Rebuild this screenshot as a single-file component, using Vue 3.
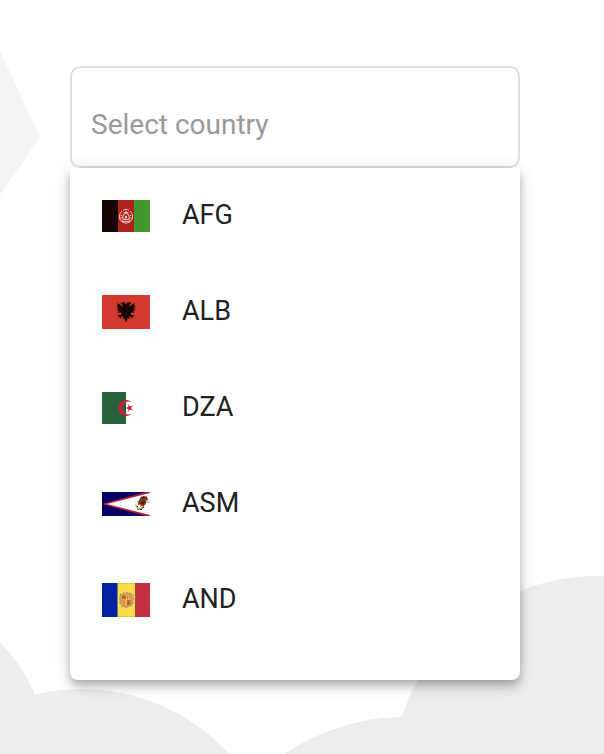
<script setup>
import { ref } from 'vue'

const query = ref('')
const selected = ref('')
const countries = ['AFG', 'ALB', 'DZA', 'ASM', 'AND']

function choose(code) {
  selected.value = code
  query.value = code
}
</script>

<template>
  <main class="page">
    <svg class="backdrop" viewBox="0 0 604 754" preserveAspectRatio="xMinYMin slice" aria-hidden="true">
      <path d="M0 51L40 137L0 195Z" fill="#f4f4f4" />
      <g fill="#ededed">
        <circle cx="-114" cy="756" r="161" />
        <circle cx="82" cy="888" r="199" />
        <circle cx="405" cy="932" r="215" />
        <circle cx="597" cy="782" r="206" />
      </g>
    </svg>

    <div class="picker">
      <input
        v-model="query"
        class="field"
        type="text"
        role="combobox"
        aria-label="Select country"
        aria-expanded="true"
        aria-controls="country-list"
        placeholder="Select country"
      />
      <ul id="country-list" class="menu">
        <li v-for="code in countries" :key="code">
          <button class="option" type="button" :aria-pressed="selected === code" @click="choose(code)">
            <svg v-if="code === 'AFG'" class="flag" viewBox="0 0 48 32" aria-hidden="true">
              <path fill="#160503" d="M0 0h16v32H0z" />
              <path fill="#b0231b" d="M16 0h16v32H16z" />
              <path fill="#43962b" d="M32 0h16v32H32z" />
              <g fill="none" stroke="#f0d0cc" stroke-width=".9">
                <path d="M20 11C15.500 15 17 22 23 23h2C31 22 32.500 15 28 11" />
                <path d="M18.500 15l2 1M18 18l2.500 0M19.500 21l2-1.500M29.500 15l-2 1M30 18l-2.500 0M28.500 21l-2-1.500M21 10.500C22.500 9 25.500 9 27 10.500" />
                <path d="M21 19.500v-3a3 3 0 0 1 6 0v3zM24 10.500v3M21.500 12.500h5M20 21.500h8" />
              </g>
              <path fill="#f0d0cc" d="M23 16h2v2.500h-2z" />
            </svg>

            <svg v-else-if="code === 'ALB'" class="flag" viewBox="0 0 48 34" aria-hidden="true">
              <path fill="#d3392f" d="M0 0h48v34H0z" />
              <path
                fill="#160706"
                d="M24 9.500L22.500 7L20 7.200L18.500 9L20.500 9.500L20.500 12L18 9.500L15 8L16 10L14.500 10L16 11.500L14.500 12L16.500 13.200L14.500 14L16.500 15L15 16L17.500 16.500L15 18L18 17.500L20 18.500L18 20L15 20L17 21.300L15.500 22.500L18 22L18.500 23.500L20 21.500L21.500 21.500L20.500 24L22.500 23.500L24 27.500L25.500 23.500L27.500 24L26.500 21.500L28 21.500L29.500 23.500L30 22L32.500 22.500L31 21.300L33 20L30 20L28 18.500L30 17.500L33 18L30.500 16.500L33 16L31.500 15L33.500 14L31.500 13.200L33.500 12L32 11.500L33.500 10L32 10L33 8L30 9.500L27.500 12L27.500 9.500L29.500 9L28 7.200L25.500 7Z"
              />
            </svg>

            <svg v-else-if="code === 'DZA'" class="flag" viewBox="0 0 48 32" aria-hidden="true">
              <path fill="#fff" d="M24 0h24v32H24z" />
              <path fill="#286239" d="M0 0h24v32H0z" />
              <path fill="#ce1c3a" d="M29.700 10.200A8 8 0 1 0 29.700 21.800A6.500 6.500 0 1 1 29.700 10.200Z" />
              <path
                fill="#ce1c3a"
                d="M23.500 16L26.300 15.100V12.200L28 14.500L30.800 13.600L29.100 16L30.800 18.400L28 17.500L26.300 19.800V16.900Z"
              />
            </svg>

            <svg v-else-if="code === 'ASM'" class="flag" viewBox="0 0 48 24" aria-hidden="true">
              <path fill="#020064" d="M0 0h48v24H0z" />
              <path fill="#bd2034" d="M0 12L44 0h4v24h-4Z" />
              <path fill="#fff" d="M5 12L48 1v22Z" />
              <path
                fill="#813c22"
                d="M38.500 5l3-1 3.500 .5 1 3-1.500 3-1.500 2.500-2 1.500-2-.5-1-1.500-2.500 .5 1-2.500-1.500-.5 2-1.500z"
              />
              <path fill="#4b2119" d="M41 4.500l4 1.500-5 1zM37 11l5-2 2 1-3 2.500z" />
              <path fill="#ddd9d6" stroke="#888" stroke-width=".4" d="M44 8l2.500 .5 1 2-2 .5-1.500-1z" />
              <path
                fill="none"
                stroke="#b19742"
                stroke-width="1.100"
                d="M33.500 12.500l2 3.500 3.500 1 3-2M35 17.500h4M38 14l1.500 2"
              />
              <path fill="#383023" d="M35 14h1v1h-1zM41 14l1.500 1-2 1.500zM38 17h2v1h-2z" />
            </svg>

            <svg v-else class="flag" viewBox="0 0 48 34" aria-hidden="true">
              <path fill="#0021a1" d="M0 0h16v34H0z" />
              <path fill="#fade4b" d="M15.500 0h17.500v34H15.500z" />
              <path fill="#c12f43" d="M33 0h15v34H33z" />
              <path
                fill="#c4a46b"
                stroke="#a58b66"
                stroke-width=".6"
                d="M18 11l2 .5L21.500 9.500l2 1L25 9l1.500 1.500 2-.5 1 1.500 2 .5-1 2 1.300 2-1 2 .7 2.500-2 1-.5 2-2.500-.3L24.500 25 22 23.500l-2 .5-.500-2.500-2-1 .8-2.500-1-2 1-2z"
              />
              <path fill="#d5582e" d="M20 12.500h4v4h-4zM24.500 17h4v4.500l-4 1z" />
              <path fill="#e9bd48" d="M24.500 12.500h4v4h-4zM20 17h4v5.500l-4-1.500z" />
              <path fill="none" stroke="#cb4930" stroke-width=".6" d="M25.500 12.500v4M27.500 12.500v4M21 17v4M22.500 17v5" />
              <path fill="none" stroke="#f2d36c" stroke-width=".6" d="M20 16.700h8.500M24.300 12.500v10" />
              <path fill="none" stroke="#c09c3d" stroke-width=".5" d="M15.500 .3h17.500M15.500 33.700h17.500" />
            </svg>
            <span class="code">{{ code }}</span>
          </button>
        </li>
      </ul>
    </div>
  </main>
</template>

<style>
body {
  margin: 0;
  background: #fff;
}
</style>

<style scoped>
.page {
  position: relative;
  box-sizing: border-box;
  min-height: 100vh;
  padding: 66px 84px 74px 70px;
  overflow: hidden;
  font-family: Roboto, "Liberation Sans", sans-serif;
}

.backdrop {
  position: absolute;
  inset: 0;
  width: 100%;
  height: 100%;
}

.picker {
  position: relative;
  display: flex;
  flex-direction: column;
}

.field {
  box-sizing: border-box;
  width: 100%;
  margin: 0;
  padding: 41px 19px 25px;
  border: 2px solid #e0e0e0;
  border-radius: 10px;
  outline: none;
  background: #fff;
  color: #212121;
  font: 400 28px/32px Roboto, "Liberation Sans", sans-serif;
}

.field::placeholder {
  color: #999;
  opacity: 1;
}

.menu {
  position: relative;
  margin: 0;
  padding: 0 0 32px;
  border-radius: 0 0 8px 8px;
  background: #fff;
  box-shadow:
    0 4px 8px -2px rgba(0, 0, 0, 0.2),
    0 8px 10px rgba(0, 0, 0, 0.14),
    0 2px 20px rgba(0, 0, 0, 0.12);
  list-style: none;
}

.option {
  display: flex;
  align-items: center;
  gap: 32px;
  width: 100%;
  height: 96px;
  padding: 0 32px;
  border: 0;
  background: none;
  color: #212121;
  font: 400 27px/32px Roboto, "Liberation Sans", sans-serif;
  text-align: left;
  cursor: pointer;
}

.code {
  padding-bottom: 2px;
}

.flag {
  flex: none;
  width: 48px;
}
</style>
